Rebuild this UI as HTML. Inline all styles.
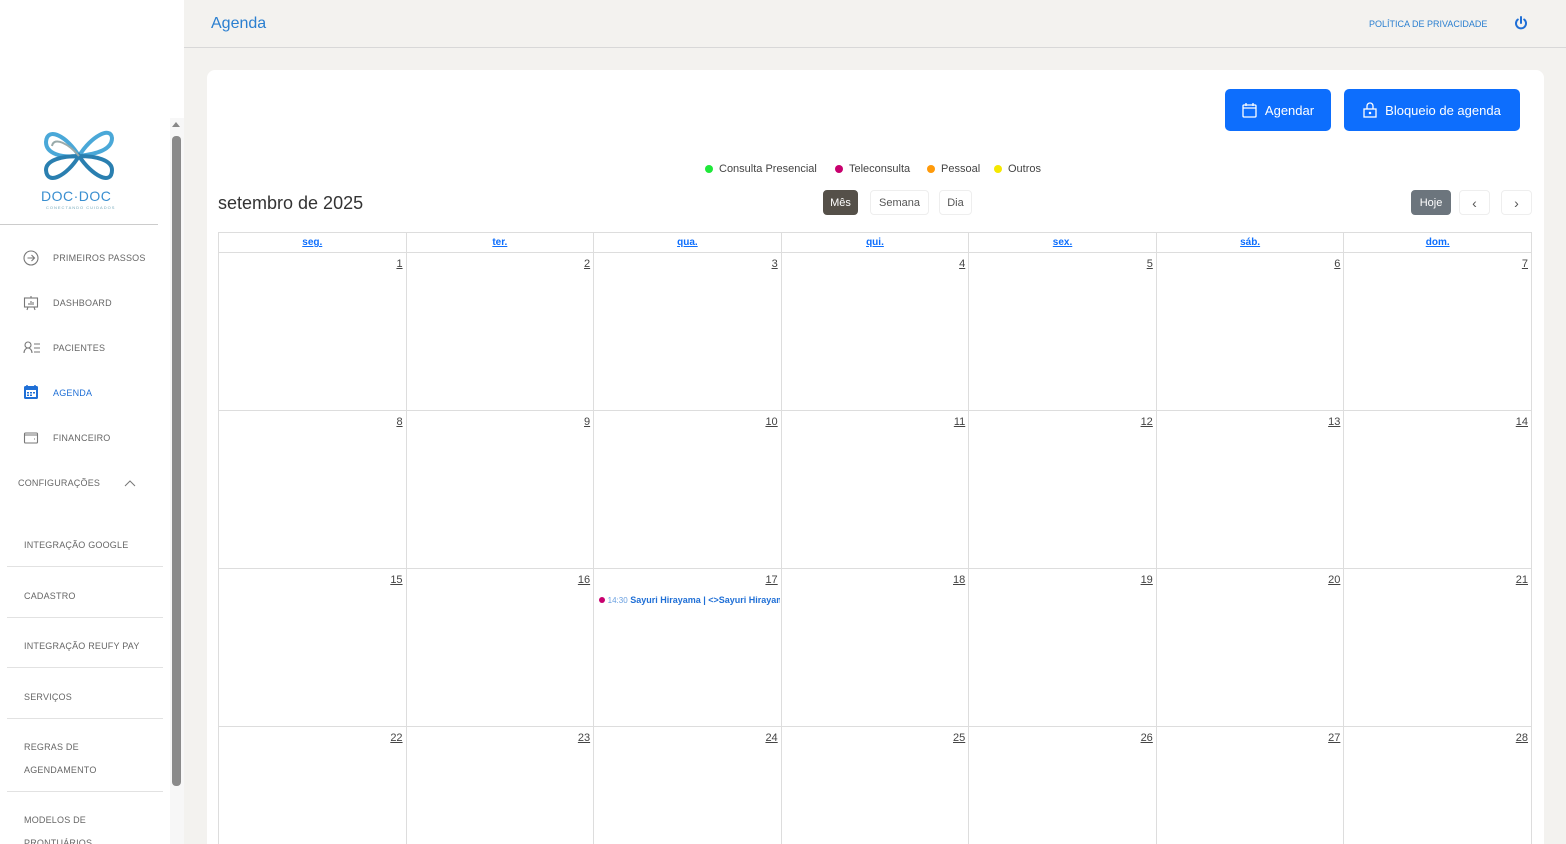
<!DOCTYPE html>
<html style="overflow:hidden;height:844px"><head><meta charset="utf-8"><style>
*{box-sizing:border-box;margin:0;padding:0}
body{width:1566px;height:844px;overflow:hidden;font-family:"Liberation Sans",sans-serif;background:#f3f2ef;position:relative}
.side{position:absolute;left:0;top:0;width:184px;height:844px;background:#fff}
.track{position:absolute;left:170px;top:118px;width:14px;height:726px;background:#f7f7f7}
.thumb{position:absolute;left:172px;top:136px;width:9px;height:650px;background:#8a8a8a;border-radius:4px}
.arrow{position:absolute;left:172px;top:122px;width:0;height:0;border-left:4px solid transparent;border-right:4px solid transparent;border-bottom:5px solid #888}
.hr{position:absolute;left:0;top:224px;width:158px;height:1px;background:#ccc}
.mi{position:absolute;left:53px;font-size:9px;color:#666;letter-spacing:.2px}
.ic{position:absolute;left:23px}
.sub{position:absolute;left:24px;font-size:9px;color:#666;letter-spacing:.2px}
.sl{position:absolute;left:7px;width:156px;height:1px;background:#e2e2e2}
.top{position:absolute;left:184px;top:0;right:0;height:48px;border-bottom:1px solid #d8d8d8}
.card{position:absolute;left:207px;top:70px;width:1337px;height:800px;background:#fff;border-radius:8px}
.btn{position:absolute;top:89px;height:42px;background:#0d6efd;color:#fff;border-radius:5px;font-size:13px;display:flex;align-items:center;justify-content:center;gap:8px}
.leg{position:absolute;top:163px;font-size:11px;color:#444;display:flex;align-items:center;gap:6px}
.dot{width:8px;height:8px;border-radius:50%}
.vb{position:absolute;top:190px;height:25px;border:1px solid #eee;border-radius:4px;font-size:11px;color:#555;display:flex;align-items:center;justify-content:center}
.wrap{position:absolute;left:218px;top:232px;width:1314px;height:612px;overflow:hidden}
table{width:1314px;border-collapse:collapse}
td,th{border:1px solid #ddd;width:187.7px}
th{height:20px;font-size:10px;color:#0d6efd;text-decoration:underline;font-weight:bold}
td{height:158px;vertical-align:top;text-align:right;font-size:11px;color:#444;padding:5px 3px 0;position:relative}
td span{text-decoration:underline}
</style></head><body>
<div class="side">
<svg style="position:absolute;left:42px;top:126px" width="74" height="60" viewBox="0 0 74 60"><g fill="none" stroke-width="4"><path d="M37 30C25 10 5 0 4 16c0 12 16 16 33 14C54 28 70 24 70 12 69 0 49 10 37 30z" stroke="#4aa8d8"/><path d="M37 30C25 50 5 60 4 44c0-10 16-14 33-14 17 0 33 4 33 14 0 16-20 6-33-14z" stroke="#2a7fb0"/><path d="M37 30C27 18 12 10 10 20" stroke="#9aa" stroke-width="2"/></g></svg>
<div style="position:absolute;left:41px;top:188px;font-size:14px;color:#3a8fd0;letter-spacing:.5px">DOC·DOC</div>
<div style="position:absolute;left:46px;top:205px;font-size:4px;color:#7ab;letter-spacing:1px">CONECTANDO CUIDADOS</div>
</div>
<div class="track"></div><div class="thumb"></div><div class="arrow"></div>
<div class="hr"></div>
<svg class="ic" style="top:250px" width="16" height="16" viewBox="0 0 16 16" fill="none" stroke="#777" stroke-width="1.1"><circle cx="8" cy="8" r="7"/><path d="M4.5 8h7M8.5 5l3 3-3 3"/></svg><div class="mi" style="top:253px">PRIMEIROS PASSOS</div>
<svg class="ic" style="top:295px" width="16" height="16" viewBox="0 0 16 16" fill="none" stroke="#777" stroke-width="1.1"><rect x="1.5" y="3" width="13" height="9"/><path d="M8 1v2M5 12l-1 3M11 12l1 3M6 10V8M8 10V6M10 10V7"/></svg><div class="mi" style="top:298px">DASHBOARD</div>
<svg class="ic" style="top:340px" width="18" height="16" viewBox="0 0 18 16" fill="none" stroke="#777" stroke-width="1.1"><circle cx="5" cy="5" r="3"/><path d="M1 13c0-3 2-5 4-5s4 2 4 5M11 4h6M11 8h6M11 12h6"/></svg><div class="mi" style="top:343px">PACIENTES</div>
<svg class="ic" style="top:384px" width="16" height="16" viewBox="0 0 16 16"><rect x="1" y="2" width="14" height="13" rx="1.5" fill="#1f6fd6"/><rect x="3" y="6" width="10" height="7" fill="#fff"/><path d="M4 1v3M12 1v3" stroke="#1f6fd6" stroke-width="1.5"/><g fill="#1f6fd6"><rect x="4" y="8" width="2" height="1.5"/><rect x="7" y="8" width="2" height="1.5"/><rect x="10" y="8" width="2" height="1.5"/><rect x="4" y="10.5" width="2" height="1.5"/><rect x="7" y="10.5" width="2" height="1.5"/></g></svg><div class="mi" style="top:388px;color:#1f6fd6">AGENDA</div>
<svg class="ic" style="top:430px" width="16" height="16" viewBox="0 0 16 16" fill="none" stroke="#777" stroke-width="1.1"><rect x="1.5" y="3" width="13" height="10" rx="1"/><path d="M1.5 5h13M11 9h1"/></svg><div class="mi" style="top:433px">FINANCEIRO</div>
<div class="mi" style="left:18px;top:478px">CONFIGURAÇÕES</div>
<svg style="position:absolute;left:124px;top:479px" width="12" height="8" viewBox="0 0 12 8" fill="none" stroke="#777"><path d="M1 7l5-5 5 5"/></svg>
<div class="sub" style="top:540px">INTEGRAÇÃO GOOGLE</div><div class="sl" style="top:566px"></div>
<div class="sub" style="top:591px">CADASTRO</div><div class="sl" style="top:617px"></div>
<div class="sub" style="top:641px">INTEGRAÇÃO REUFY PAY</div><div class="sl" style="top:667px"></div>
<div class="sub" style="top:692px">SERVIÇOS</div><div class="sl" style="top:718px"></div>
<div class="sub" style="top:742px">REGRAS DE</div><div class="sub" style="top:765px">AGENDAMENTO</div><div class="sl" style="top:791px"></div>
<div class="sub" style="top:815px">MODELOS DE</div><div class="sub" style="top:838px">PRONTUÁRIOS</div>
<div class="top"></div>
<div style="position:absolute;left:211px;top:15px;font-size:16px;color:#2a7fd0">Agenda</div>
<div style="position:absolute;left:1369px;top:19px;font-size:9px;color:#2a7fd0">POLÍTICA DE PRIVACIDADE</div>
<svg style="position:absolute;left:1514px;top:16px" width="14" height="14" viewBox="0 0 14 14" fill="none" stroke="#1f6fd6" stroke-width="2" stroke-linecap="round"><path d="M7 1v6M3.8 3.5a5 5 0 1 0 6.4 0"/></svg>
<div class="card"></div>
<div class="btn" style="left:1225px;width:106px"><svg width="15" height="15" viewBox="0 0 15 15" fill="none" stroke="#fff" stroke-width="1.3"><rect x="1" y="2" width="13" height="12" rx="1"/><path d="M1 5h13M4 0v3M11 0v3"/></svg>Agendar</div>
<div class="btn" style="left:1344px;width:176px"><svg width="14" height="16" viewBox="0 0 14 16" fill="none" stroke="#fff" stroke-width="1.3"><rect x="1" y="7" width="12" height="8"/><path d="M4 7V4a3 3 0 0 1 6 0v3"/><circle cx="7" cy="11" r=".6" fill="#fff"/></svg>Bloqueio de agenda</div>
<div class="leg" style="left:705px"><div class="dot" style="background:#1fe83a"></div>Consulta Presencial</div>
<div class="leg" style="left:835px"><div class="dot" style="background:#c8006e"></div>Teleconsulta</div>
<div class="leg" style="left:927px"><div class="dot" style="background:#ff9a0a"></div>Pessoal</div>
<div class="leg" style="left:994px"><div class="dot" style="background:#f5e800"></div>Outros</div>
<div style="position:absolute;left:218px;top:193px;font-size:18px;color:#333">setembro de 2025</div>
<div class="vb" style="left:823px;width:35px;background:#555049;color:#fff;border-color:#555049">Mês</div>
<div class="vb" style="left:870px;width:59px">Semana</div>
<div class="vb" style="left:939px;width:33px">Dia</div>
<div class="vb" style="left:1411px;width:40px;background:#6c757d;color:#fff;border-color:#6c757d">Hoje</div>
<div class="vb" style="left:1459px;width:31px;font-size:14px">‹</div>
<div class="vb" style="left:1501px;width:31px;font-size:14px">›</div>
<div class="wrap"><table>
<tr><th>seg.</th><th>ter.</th><th>qua.</th><th>qui.</th><th>sex.</th><th>sáb.</th><th>dom.</th></tr>
<tr><td><span>1</span></td><td><span>2</span></td><td><span>3</span></td><td><span>4</span></td><td><span>5</span></td><td><span>6</span></td><td><span>7</span></td></tr>
<tr><td><span>8</span></td><td><span>9</span></td><td><span>10</span></td><td><span>11</span></td><td><span>12</span></td><td><span>13</span></td><td><span>14</span></td></tr>
<tr><td><span>15</span></td><td><span>16</span></td><td><span>17</span><div style="position:absolute;left:5px;top:26px;width:181px;overflow:hidden;white-space:nowrap;text-align:left;font-size:9px;color:#1f6fd6"><span style="display:inline-block;width:6px;height:6px;border-radius:50%;background:#c8006e;text-decoration:none"></span> <i style="font-style:normal;font-size:8px;color:#6aa0e0">14:30</i> <b>Sayuri Hirayama | &lt;&gt;Sayuri Hirayama</b></div></td><td><span>18</span></td><td><span>19</span></td><td><span>20</span></td><td><span>21</span></td></tr>
<tr><td><span>22</span></td><td><span>23</span></td><td><span>24</span></td><td><span>25</span></td><td><span>26</span></td><td><span>27</span></td><td><span>28</span></td></tr>
</table></div>
</body></html>
